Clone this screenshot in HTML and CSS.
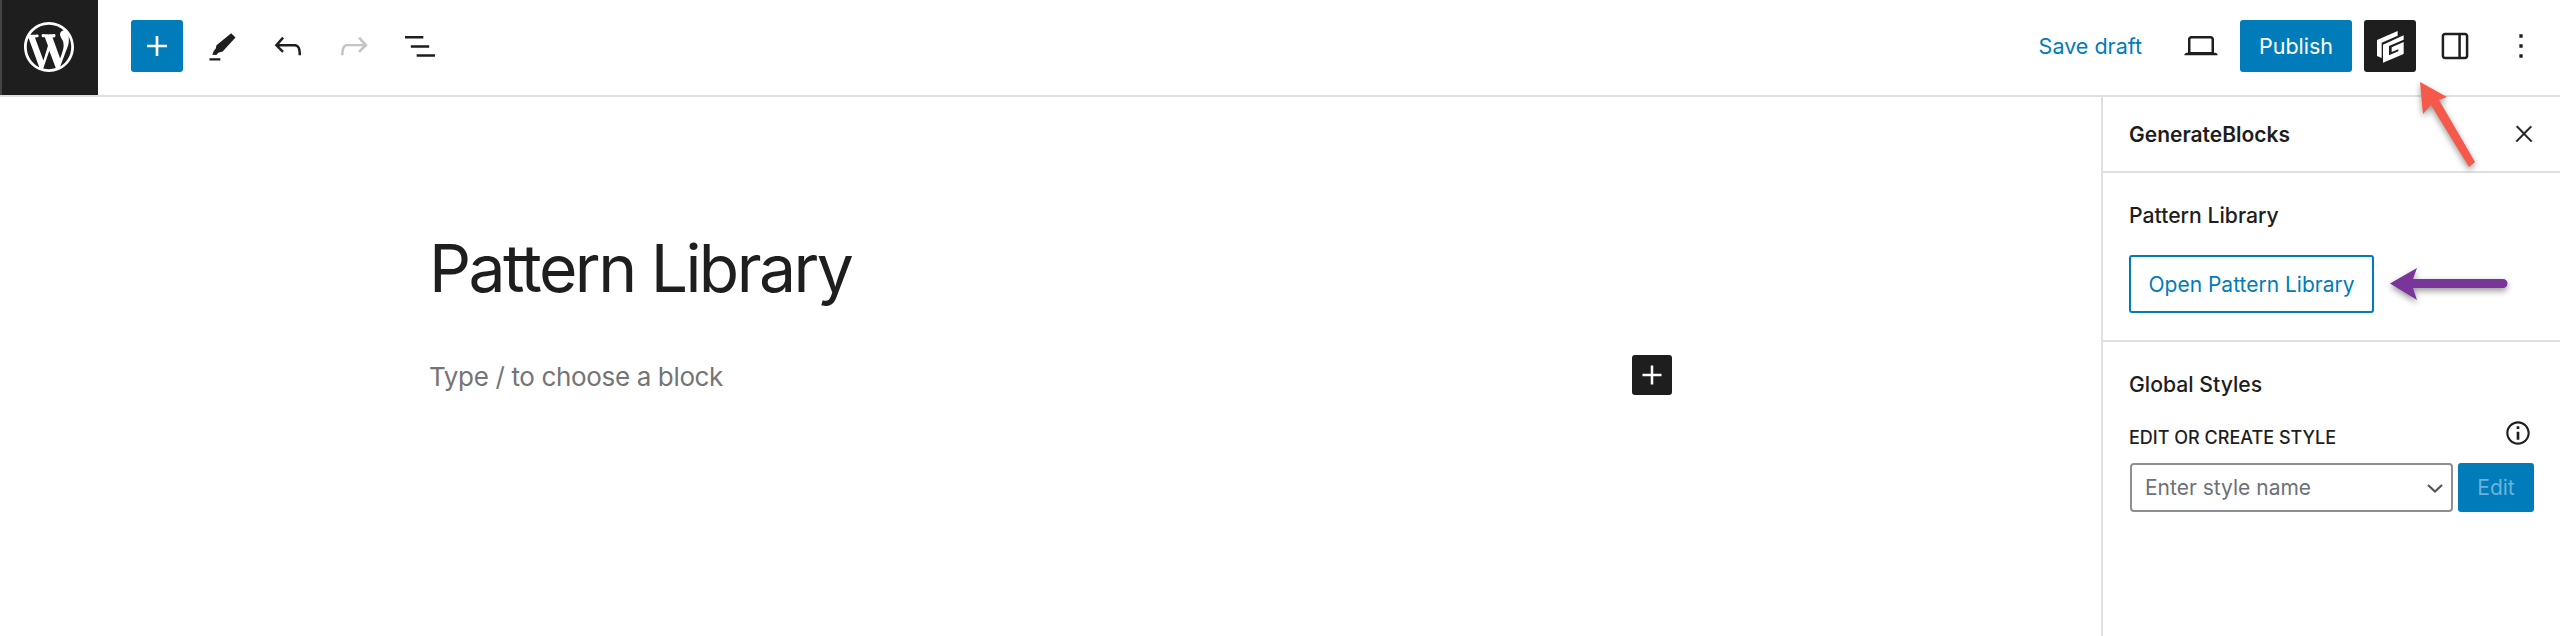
FILE: index.html
```html
<!DOCTYPE html>
<html lang="en">
<head>
    <meta charset="UTF-8">
    <title>Pattern Library</title>
    <link rel="stylesheet" href="styles.css">
</head>
<body>
    <header class="topbar">
        <a class="wp-logo">
            <svg viewBox="0 0 20 20" width="50" height="50"><path fill="#fff" d="M20 10c0-5.51-4.49-10-10-10C4.48 0 0 4.49 0 10c0 5.52 4.48 10 10 10 5.51 0 10-4.48 10-10zM7.78 15.37L4.37 6.22c.55-.02 1.17-.08 1.17-.08.5-.06.44-1.13-.06-1.11 0 0-1.45.11-2.37.11-.18 0-.37 0-.58-.01C4.12 2.69 6.87 1.11 10 1.11c2.33 0 4.45.87 6.05 2.34-.68-.11-1.65.39-1.65 1.58 0 .74.45 1.36.9 2.1.35.61.55 1.36.55 2.46 0 1.49-1.4 5-1.4 5l-3.03-8.37c.54-.02.82-.17.82-.17.5-.05.44-1.25-.06-1.22 0 0-1.44.12-2.38.12-.87 0-2.33-.12-2.33-.12-.5-.03-.56 1.2-.06 1.22l.92.08 1.26 3.41zM17.41 10c.24-.64.74-1.87.43-4.25.7 1.29 1.05 2.71 1.05 4.25 0 3.29-1.73 6.24-4.4 7.78.97-2.59 1.94-5.2 2.92-7.78zM6.1 18.09C3.12 16.65 1.11 13.53 1.11 10c0-1.3.23-2.48.72-3.59C3.25 10.3 4.67 14.2 6.1 18.09zm4.03-6.63l2.58 6.98c-.86.29-1.76.45-2.71.45-.79 0-1.57-.11-2.29-.33.81-2.38 1.62-4.74 2.42-7.1z"/></svg>
        </a>
        <div class="tools-left">
            <span class="square-btn blue-btn">
                <svg viewBox="0 0 24 24" width="40" height="40"><path fill="#fff" d="M18 11.2h-5.2V6h-1.6v5.2H6v1.6h5.2V18h1.6v-5.2H18z"/></svg>
            </span>
            <span class="icon-btn">
                <svg viewBox="0 0 24 24" width="40" height="40"><path fill="#1e1e1e" d="M4.5 19.300h6.500v1.400H4.500zM17.500 4.400l2.600 2.500-7.700 8.400-2.600.8-1.200 1.300-2.400-.1.900-2.400 1.100-1.200.5-2.200z"/></svg>
            </span>
            <span class="icon-btn">
                <svg viewBox="0 0 24 24" width="40" height="40"><path fill="#1e1e1e" d="M18.3 11.7c-.6-.6-1.4-.9-2.3-.9H6.7l2.9-3.3-1.1-1-4.5 5L8.5 16l1-1-2.7-2.7H16c.5 0 .9.2 1.3.5 1 1 1 3.4 1 4.5v.3h1.5v-.2c0-1.5 0-4.3-1.5-5.7z"/></svg>
            </span>
            <span class="icon-btn">
                <svg viewBox="0 0 24 24" width="40" height="40"><path fill="#c4c4c4" d="M15.6 6.5l-1.1 1 2.9 3.3H8c-.9 0-1.7.3-2.3.9-1.4 1.5-1.4 4.2-1.4 5.6v.2h1.5v-.3c0-1.1 0-3.5 1-4.5.3-.3.7-.5 1.3-.5h9.2L14.5 15l1.1 1.1 4.6-4.6-4.6-5z"/></svg>
            </span>
            <span class="icon-btn">
                <svg viewBox="0 0 24 24" width="40" height="40"><path fill="#1e1e1e" d="M3 6h11v1.5H3V6zm3.5 5.5h11V13h-11v-1.5zM21 17H10v1.5h11V17z"/></svg>
            </span>
        </div>
        <div class="tools-right">
            <span class="save-draft">Save draft</span>
            <span class="icon-btn">
                <svg viewBox="0 0 24 24" width="40" height="40"><path fill="#1e1e1e" d="M20.5 16h-.7V8c0-1.1-.9-2-2-2H6.2c-1.1 0-2 .9-2 2v8h-.7c-.8 0-1.5.7-1.5 1.5h20c0-.8-.7-1.5-1.5-1.5zM5.7 8c0-.3.2-.5.5-.5h11.6c.3 0 .5.2.5.5v7.6H5.7V8z"/></svg>
            </span>
            <span class="publish-btn">Publish</span>
            <span class="square-btn dark-btn">
                <svg viewBox="30 25 90 105" width="30" height="35"><path fill="#fff" d="M36 58 98 31V45L50 66V112L36 106zM54 72 116 44V57L72 76V104L100 92V86L80 94V80L116 64V100L54 126z"/></svg>
            </span>
            <span class="icon-btn">
                <svg viewBox="0 0 24 24" width="40" height="40"><path fill="#1e1e1e" d="M18 4H6c-1.1 0-2 .9-2 2v12c0 1.100.9 2 2 2h12c1.100 0 2-.9 2-2V6c0-1.100-.9-2-2-2zm-4 14.500H6c-.3 0-.5-.2-.5-.5V6c0-.3.2-.5.5-.5h8v13zm4.500-.5c0 .3-.2.5-.5.5h-2.500v-13H18c.3 0 .5.2.5.5v12z"/></svg>
            </span>
            <span class="icon-btn">
                <svg viewBox="0 0 24 24" width="40" height="40"><path fill="#1e1e1e" d="M13 19h-2v-2h2v2zm0-6h-2v-2h2v2zm0-6h-2V5h2v2z"/></svg>
            </span>
        </div>
    </header>

    <div class="workspace">
        <main class="editor">
            <div class="post-column">
                <h1 class="post-title">Pattern Library</h1>
                <div class="block-row">
                    <span class="placeholder">Type / to choose a block</span>
                    <span class="inserter">
                        <svg viewBox="0 0 24 24" width="38" height="38"><path fill="#fff" d="M18 11.200h-5.200V6h-1.600v5.200H6v1.600h5.200V18h1.600v-5.200H18z"/></svg>
                    </span>
                </div>
            </div>
        </main>

        <aside class="sidebar">
            <div class="sidebar-head">
                <span>GenerateBlocks</span>
                <svg viewBox="0 0 24 24" width="26" height="26"><path fill="#1e1e1e" stroke="#1e1e1e" stroke-width=".5" d="M13 11.800l6.100-6.300-1-1-6.100 6.200-6.100-6.300-1 1 6.100 6.300-6.500 6.700 1 1 6.500-6.600 6.500 6.600 1-1z"/></svg>
            </div>
            <section class="panel panel-library">
                <h2>Pattern Library</h2>
                <span class="outline-btn">Open Pattern Library</span>
            </section>
            <section class="panel panel-styles">
                <h2>Global Styles</h2>
                <div class="field-label">
                    <span class="field-text">EDIT OR CREATE STYLE</span>
                    <svg viewBox="0 0 24 24" width="32" height="32"><path fill="#1e1e1e" d="M12 3.200c-4.800 0-8.800 3.900-8.800 8.800 0 4.800 3.900 8.800 8.800 8.800 4.800 0 8.800-3.900 8.800-8.800 0-4.800-4-8.800-8.800-8.800zm0 16c-4 0-7.200-3.300-7.200-7.200C4.800 8 8 4.800 12 4.800s7.200 3.300 7.200 7.200c0 4-3.200 7.200-7.200 7.200zM11 17h2v-6h-2v6zm0-8h2V7h-2v2z"/></svg>
                </div>
                <div class="style-row">
                    <div class="style-select">
                        <span>Enter style name</span>
                        <svg viewBox="0 0 24 24" width="24" height="24"><path fill="none" stroke="#555" stroke-width="2.200" d="M5 9l7 6.500L19 9"/></svg>
                    </div>
                    <span class="edit-btn">Edit</span>
                </div>
            </section>
        </aside>
    </div>

    <!-- annotation arrows drawn on top of the screenshot -->
    <svg class="arrow arrow-red" viewBox="0 0 70 100" width="70" height="100">
        <path fill="#f4594c" d="M5 4 32 19 24 22 60 84 54 89 16 27 8 36z"/>
    </svg>
    <svg class="arrow arrow-purple" viewBox="0 0 124 50" width="124" height="50">
        <path fill="#7a359b" d="M4 24.500 31 9 27 20H117a4.500 4.500 0 0 1 0 9H27l4 12z"/>
    </svg>
</body>
</html>
```

FILE: styles.css
```css
* {
    box-sizing: border-box;
}
html, body {
    margin: 0;
    height: 636px;
    overflow: hidden;
}
body {
    position: relative;
    font-family: Inter, "Liberation Sans", sans-serif;
    color: #1e1e1e;
    background-color: #fff;
}
svg {
    display: block;
    flex: none;
}

/* top bar */
.topbar {
    display: flex;
    align-items: center;
    height: 97px;
    border-bottom: 2px solid #e0e0e0;
}
.wp-logo {
    display: flex;
    align-items: center;
    justify-content: center;
    align-self: flex-start;
    width: 98px;
    height: 95px;
    padding: 0 2px 2px 0;
    background-color: #1e1e1e;
    border-left: 2px solid #444;
}
.tools-left {
    display: flex;
    align-items: center;
    flex: 1;
    padding: 0 0 3px 33px;
    gap: 12px;
}
.tools-right {
    display: flex;
    align-items: center;
    gap: 12px;
    padding: 0 12px 3px 0;
}
.square-btn {
    display: flex;
    align-items: center;
    justify-content: center;
    width: 52px;
    height: 52px;
    border-radius: 3px;
}
.blue-btn {
    background-color: #007cba;
}
.dark-btn {
    background-color: #1e1e1e;
}
.icon-btn {
    display: flex;
    align-items: center;
    justify-content: center;
    width: 54px;
    height: 52px;
}
.save-draft {
    color: #007cba;
    font-size: 21.5px;
    margin-right: 20px;
}
.publish-btn {
    display: flex;
    align-items: center;
    justify-content: center;
    width: 112px;
    height: 52px;
    border-radius: 3px;
    background-color: #007cba;
    color: #fff;
    font-size: 21.5px;
}

/* main area */
.workspace {
    display: flex;
    height: 539px;
}
.editor {
    flex: 1;
    padding: 132px 0 0 429px;
}
.post-column {
    width: 1246px;
}
.post-title {
    margin: 0;
    font-size: 66px;
    font-weight: 400;
    line-height: 79px;
    letter-spacing: -2.55px;
}
.block-row {
    display: flex;
    align-items: center;
    justify-content: space-between;
    margin-top: 47px;
}
.placeholder {
    margin-top: 2px;
    color: #757575;
    font-size: 26px;
    letter-spacing: -0.35px;
}
.inserter {
    display: flex;
    align-items: center;
    justify-content: center;
    width: 40px;
    height: 40px;
    margin-right: 3px;
    border-radius: 3px;
    background-color: #1e1e1e;
}

/* sidebar */
.sidebar {
    width: 459px;
    border-left: 2px solid #e0e0e0;
}
.sidebar-head {
    display: flex;
    align-items: center;
    justify-content: space-between;
    height: 76px;
    padding: 0 23px 0 26px;
    border-bottom: 2px solid #e0e0e0;
    font-size: 21px;
    font-weight: 600;
}
.panel {
    padding: 0 26px;
}
.panel h2 {
    margin: 0;
    font-size: 21.2px;
    font-weight: 500;
    line-height: 28px;
}
.panel-library {
    height: 169px;
    padding-top: 28px;
    border-bottom: 2px solid #e0e0e0;
}
.outline-btn {
    display: inline-flex;
    align-items: center;
    justify-content: center;
    width: 245px;
    height: 58px;
    margin-top: 26px;
    border: 2px solid #007cba;
    border-radius: 3px;
    color: #007cba;
    font-size: 21px;
}
.panel-styles {
    padding-top: 28px;
}
.field-label {
    display: flex;
    align-items: center;
    justify-content: space-between;
    height: 32px;
    margin-top: 19px;
    font-size: 18px;
    font-weight: 500;
}
.field-text {
    margin-top: 8px;
}
.style-row {
    display: flex;
    gap: 5px;
    margin-top: 14px;
    padding-left: 1px;
}
.style-select {
    display: flex;
    align-items: center;
    justify-content: space-between;
    width: 323px;
    height: 49px;
    padding: 0 4px 0 13px;
    border: 2px solid #8c8f94;
    border-radius: 4px;
    color: #6c7078;
    font-size: 21px;
}
.edit-btn {
    display: flex;
    align-items: center;
    justify-content: center;
    width: 76px;
    height: 49px;
    border-radius: 3px;
    background-color: #007cba;
    color: #6db3d9;
    font-size: 21px;
}

/* annotations */
.arrow {
    position: absolute;
    filter: drop-shadow(0 3px 3px rgba(0, 0, 0, 0.4));
}
.arrow-red {
    left: 2415px;
    top: 78px;
}
.arrow-purple {
    left: 2386px;
    top: 259px;
}
```
